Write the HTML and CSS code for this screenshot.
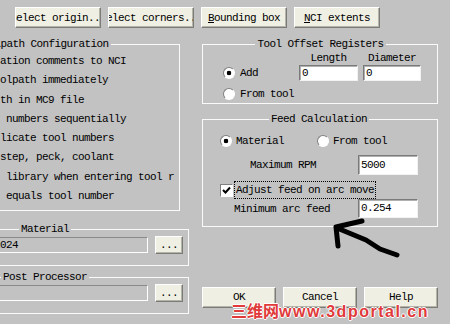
FILE: index.html
```html
<!DOCTYPE html>
<html lang="en">
<head>
    <meta charset="UTF-8">
    <title>NCI Setup</title>
    <link rel="stylesheet" href="styles.css">
</head>
<body>
    <div class="dialog">
        <div class="toolbar">
            <button class="btn btn-top"><span>Select origin...</span></button>
            <button class="btn btn-top"><span>Select corners...</span></button>
            <button class="btn btn-top"><span><u>B</u>ounding box</span></button>
            <button class="btn btn-top"><span><u>N</u>CI extents</span></button>
        </div>

        <div class="main">
            <div class="col-left">
                <fieldset class="group group-config">
                    <legend>Toolpath Configuration</legend>
                    <ul class="options">
                        <li>ation comments to NCI</li>
                        <li>olpath immediately</li>
                        <li>th in MC9 file</li>
                        <li> numbers sequentially</li>
                        <li>licate tool numbers</li>
                        <li>step, peck, coolant</li>
                        <li> library when entering tool r</li>
                        <li> equals tool number</li>
                    </ul>
                </fieldset>

                <fieldset class="group group-file">
                    <legend>Material</legend>
                    <div class="file-row">
                        <div class="field field-disabled">ALUMINUM mm - 2024</div>
                        <button class="btn btn-dots">...</button>
                    </div>
                </fieldset>

                <fieldset class="group group-file group-post">
                    <legend>Post Processor</legend>
                    <div class="file-row">
                        <div class="field field-disabled"></div>
                        <button class="btn btn-dots">...</button>
                    </div>
                </fieldset>
            </div>

            <div class="col-right">
                <fieldset class="group group-offset">
                    <legend>Tool Offset Registers</legend>
                    <div class="offset-grid">
                        <div class="col-head head-length">Length</div>
                        <div class="col-head">Diameter</div>
                        <div class="radio-item"><span class="radio on"></span>Add</div>
                        <div class="field">0</div>
                        <div class="field">0</div>
                        <div class="radio-item from-tool"><span class="radio"></span>From tool</div>
                    </div>
                </fieldset>

                <fieldset class="group group-feed">
                    <legend>Feed Calculation</legend>
                    <div class="feed-radios">
                        <div class="radio-item"><span class="radio on"></span>Material</div>
                        <div class="radio-item radio-tool"><span class="radio"></span>From tool</div>
                    </div>
                    <div class="feed-row">
                        <span class="label-rpm">Maximum RPM</span>
                        <div class="field field-feed">5000</div>
                    </div>
                    <div class="check-row">
                        <span class="check">
                            <svg width="9" height="9" viewBox="0 0 9 9"><path d="M1 4 L3.5 6.5 L8 1.5" fill="none" stroke="#000" stroke-width="2"/></svg>
                        </span>
                        <span class="check-label">Adjust feed on arc move</span>
                    </div>
                    <div class="feed-row feed-row-min">
                        <span class="label-min">Minimum arc feed</span>
                        <div class="field field-feed field-min">0.254</div>
                    </div>
                </fieldset>

                <div class="footer">
                    <button class="btn btn-foot">OK</button>
                    <button class="btn btn-foot">Cancel</button>
                    <button class="btn btn-foot">Help</button>
                </div>
            </div>
        </div>

        <svg class="arrow" width="450" height="324" viewBox="0 0 450 324">
            <path d="M336 227 L362 221 M336 227 L338 246 M337 228 L366 240 L380 249 L397 255" fill="none" stroke="#000" stroke-width="5" stroke-linecap="round" stroke-linejoin="round"/>
        </svg>

        <div class="watermark"><span class="wm-cjk">三维网</span><span class="wm-url">www.3dportal.cn</span></div>
    </div>
</body>
</html>
```

FILE: styles.css
```css
html, body {
    margin: 0;
}
body {
    width: 450px;
    height: 324px;
    overflow: hidden;
    background: #c2c2c2;
    color: #000;
    font-family: "Liberation Mono", "DejaVu Sans Mono", monospace;
    font-size: 11px;
    letter-spacing: -0.6px;
    line-height: 14px;
}
.dialog {
    position: relative;
    width: 450px;
    height: 324px;
}

/* buttons */
.btn {
    font: inherit;
    letter-spacing: inherit;
    color: #000;
    background: #efefe3;
    border: 1px solid;
    border-color: #fff #7c7c76 #7c7c76 #fff;
    box-shadow: inset -1px -1px 0 #b4b4aa;
    padding: 0;
    display: flex;
    align-items: center;
    justify-content: center;
    overflow: hidden;
    white-space: nowrap;
    box-sizing: border-box;
}
.btn span {
    flex-shrink: 0;
}
.toolbar {
    display: flex;
    gap: 7px;
    padding: 7px 0 0 15px;
}
.btn-top {
    width: 86px;
    height: 21px;
}
.btn-dots {
    width: 28px;
    height: 18px;
    flex-shrink: 0;
}
.btn-foot {
    width: 74px;
    height: 21px;
    padding-bottom: 2px;
}

/* layout */
.main {
    display: flex;
    margin-top: 9px;
}
.col-left {
    width: 287px;
    margin-left: -98px;
    flex-shrink: 0;
}
.col-right {
    width: 236px;
    margin-left: 13px;
    flex-shrink: 0;
}

/* group boxes */
.group {
    margin: 0;
    min-width: 0;
    box-sizing: border-box;
    border: 1px solid #fafafa;
}
.group legend {
    margin: 0 auto;
    padding: 0 2px;
    line-height: 14px;
}
.group-config {
    width: 275px;
    margin-left: 3px;
    padding: 1px 0 4px 0;
}
.options {
    list-style: none;
    margin: 0;
    padding: 0 0 0 94px;
}
.options li {
    height: 19.3px;
    line-height: 19.3px;
    white-space: pre;
}
.group-file {
    margin-top: 11px;
    padding: 0 5px 11px 4px;
}
.group-post {
    margin-top: 4px;
}
.file-row {
    display: flex;
    align-items: center;
    gap: 7px;
}

/* fields */
.field {
    background: #fff;
    border: 1px solid;
    border-color: #7a7a7a #f2f2f2 #f2f2f2 #7a7a7a;
    box-shadow: inset 1px 1px 0 #b0b0b0;
    padding: 0 2px;
    box-sizing: border-box;
    height: 16px;
    line-height: 14px;
    white-space: nowrap;
    overflow: hidden;
}
.field-disabled {
    flex: 1;
    background: #c2c2c2;
    box-shadow: none;
    border-color: #8a8a8a #fff #fff #8a8a8a;
}

/* tool offset */
.group-offset {
    padding: 0 19px 6px 20px;
}
.offset-grid {
    display: grid;
    grid-template-columns: 71px 59px 58px;
    grid-template-rows: 14px 16px 16px;
    column-gap: 5px;
}
.col-head {
    text-align: center;
}
.head-length {
    grid-column: 2;
}
.radio-item {
    display: flex;
    align-items: center;
    gap: 5px;
    height: 16px;
    white-space: nowrap;
}
.from-tool {
    margin-top: 5px;
}
.radio {
    width: 12px;
    height: 12px;
    border-radius: 50%;
    box-sizing: border-box;
    border: 1px solid;
    border-color: #808080 #fff #fff #808080;
    background: #fff;
    flex-shrink: 0;
}
.radio.on {
    background: radial-gradient(circle, #000 0 2px, #fff 2.6px);
}

/* feed calculation */
.group-feed {
    margin-top: 8px;
    padding: 7px 19px 8px 17px;
}
.feed-radios {
    display: flex;
    height: 16px;
    align-items: center;
}
.feed-radios .radio-item {
    gap: 4px;
}
.radio-tool {
    margin-left: 33px;
}
.feed-row {
    display: flex;
    align-items: center;
    margin-top: 6px;
}
.feed-row-min {
    margin-top: 0;
}
.label-rpm {
    margin-left: 30px;
}
.label-min {
    margin-left: 14px;
}
.field-feed {
    width: 60px;
    height: 20px;
    line-height: 18px;
    margin-left: auto;
}
.field-min {
    height: 19px;
    line-height: 17px;
}
.check-row {
    display: flex;
    align-items: center;
    height: 18px;
    margin-top: 6px;
}
.check {
    width: 13px;
    height: 13px;
    box-sizing: border-box;
    background: #fff;
    border: 1px solid;
    border-color: #808080 #fff #fff #808080;
    display: flex;
    align-items: center;
    justify-content: center;
}
.check-label {
    margin-left: 1px;
    padding: 0 1px;
    border: 1px dotted #000;
    line-height: 16px;
}

.footer {
    display: flex;
    justify-content: space-between;
    margin-top: 60px;
}

/* overlays */
.arrow {
    position: absolute;
    left: 0;
    top: 0;
    pointer-events: none;
}
.watermark {
    position: absolute;
    left: 231px;
    top: 301px;
    font-family: "Liberation Sans", "Noto Sans CJK SC", sans-serif;
    font-weight: bold;
    font-size: 16px;
    line-height: 18px;
    letter-spacing: 0;
    color: #e03a3a;
    white-space: nowrap;
    text-shadow: 1px 0 0 #fff, -1px 0 0 #fff, 0 1px 0 #fff, 0 -1px 0 #fff;
}
.wm-cjk {
    font-family: "Noto Sans CJK SC", sans-serif;
}
.wm-url {
    letter-spacing: 1.5px;
}
```
